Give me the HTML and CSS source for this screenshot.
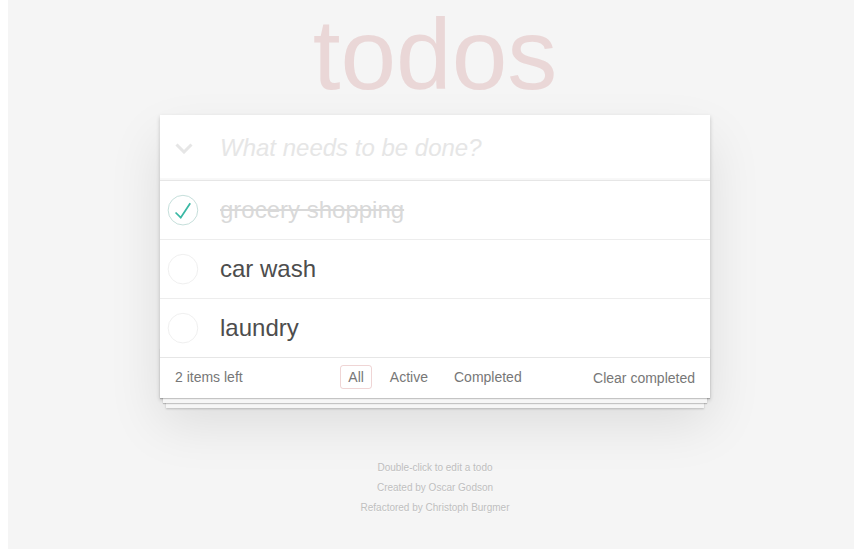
FILE: index.html
```html
<!DOCTYPE html>
<html>
<head>
<meta charset="utf-8">
<title>todos</title>
<link rel="stylesheet" href="styles.css">
</head>
<body>
<div class="page">
  <h1 class="title">todos</h1>
  <section class="todoapp">
    <header class="header">
      <span class="toggle-all">
        <svg width="18" height="11" viewBox="0 0 18 11"><polyline points="1.5,1.5 9,9 16.5,1.5" fill="none" stroke="#e6e6e6" stroke-width="3"/></svg>
      </span>
      <input class="new-todo" placeholder="What needs to be done?">
    </header>
    <section class="main">
      <ul class="todo-list">
        <li class="todo completed">
          <svg class="toggle" width="40" height="40" viewBox="-10 -18 100 135"><circle cx="50" cy="50" r="50" fill="none" stroke="#bddad5" stroke-width="3"/><path fill="#3ab8a4" d="M72 25L42 71 27 56l-4 4 20 20 34-52z"/></svg>
          <label class="todo-label">grocery shopping</label>
        </li>
        <li class="todo">
          <svg class="toggle" width="40" height="40" viewBox="-10 -18 100 135"><circle cx="50" cy="50" r="50" fill="none" stroke="#ededed" stroke-width="3"/></svg>
          <label class="todo-label">car wash</label>
        </li>
        <li class="todo">
          <svg class="toggle" width="40" height="40" viewBox="-10 -18 100 135"><circle cx="50" cy="50" r="50" fill="none" stroke="#ededed" stroke-width="3"/></svg>
          <label class="todo-label">laundry</label>
        </li>
      </ul>
    </section>
    <footer class="footer">
      <span class="todo-count">2 items left</span>
      <ul class="filters">
        <li><a class="filter selected">All</a></li>
        <li><a class="filter">Active</a></li>
        <li><a class="filter">Completed</a></li>
      </ul>
      <span class="clear-wrap"><button class="clear-completed">Clear completed</button></span>
    </footer>
  </section>
  <footer class="info">
    <p>Double-click to edit a todo</p>
    <p>Created by Oscar Godson</p>
    <p>Refactored by Christoph Burgmer</p>
  </footer>
</div>
</body>
</html>
```

FILE: styles.css
```css
html {
  background: #fff;
  margin: 0;
  padding: 0;
}

body {
  margin: 0 8px;
  padding: 0 0 0 8px;
  min-height: 549px;
  box-sizing: border-box;
  background: #f5f5f5;
  font: 14px "Liberation Sans", Arial, sans-serif;
  line-height: 1.4em;
  color: #4d4d4d;
  overflow: hidden;
}

.page {
  width: 550px;
  margin: 0 auto;
  padding-top: 2px;
}

.title {
  margin: 0;
  height: 104px;
  font-size: 100px;
  line-height: 104px;
  font-weight: 100;
  text-align: center;
  color: rgba(175, 47, 47, 0.15);
  text-rendering: optimizeLegibility;
}

.todoapp {
  background: #fff;
  margin: 9px 0 0;
  position: relative;
  box-shadow: 0 2px 4px 0 rgba(0, 0, 0, 0.2), 0 25px 50px 0 rgba(0, 0, 0, 0.1);
}

.header {
  display: flex;
  align-items: center;
  height: 65px;
  box-shadow: inset 0 -2px 1px rgba(0, 0, 0, 0.03);
}

.toggle-all {
  display: flex;
  width: 18px;
  height: 11px;
  margin: 0 27px 0 15px;
  padding-top: 1px;
}

.new-todo {
  flex: 1;
  min-width: 0;
  margin: 0;
  padding: 0 16px 0 0;
  border: none;
  outline: none;
  background: transparent;
  font-family: inherit;
  font-size: 24px;
  line-height: 33.6px;
  height: 65px;
  box-sizing: border-box;
  color: inherit;
}

.new-todo::placeholder {
  font-style: italic;
  font-weight: 300;
  color: #e6e6e6;
}

.main {
  border-top: 1px solid #e6e6e6;
}

.todo-list {
  margin: 0;
  padding: 0;
  list-style: none;
}

.todo {
  display: flex;
  align-items: center;
  font-size: 24px;
  border-bottom: 1px solid #ededed;
}

.todo:last-child {
  border-bottom: none;
}

.toggle {
  flex: none;
  margin-right: 20px;
}

.todo-label {
  display: block;
  padding: 15px 15px 15px 0;
  line-height: 28px;
  word-break: break-all;
  color: #4d4d4d;
}

.completed .todo-label {
  color: #d9d9d9;
  text-decoration: line-through;
}

.footer {
  position: relative;
  display: grid;
  grid-template-columns: 1fr auto 1fr;
  align-items: center;
  height: 20px;
  padding: 10px 15px;
  border-top: 1px solid #e6e6e6;
  color: #777;
  text-align: center;
}

.footer::before {
  content: '';
  position: absolute;
  right: 0;
  bottom: 0;
  left: 0;
  height: 50px;
  overflow: hidden;
  box-shadow: 0 1px 1px rgba(0, 0, 0, 0.2),
              0 8px 0 -3px #f6f6f6,
              0 9px 1px -3px rgba(0, 0, 0, 0.2),
              0 16px 0 -6px #f6f6f6,
              0 17px 2px -6px rgba(0, 0, 0, 0.2);
}

.todo-count {
  text-align: left;
  line-height: 20px;
  margin-top: -2px;
}

.filters {
  display: flex;
  align-items: center;
  gap: 10px;
  height: 20px;
  margin: -2px 0 0;
  padding: 0;
  list-style: none;
  line-height: 20px;
}

.filters li {
  display: flex;
  align-items: center;
  height: 20px;
}

.filter {
  display: block;
  padding: 1px 7px;
  line-height: 20px;
  border: 1px solid transparent;
  border-radius: 3px;
  color: inherit;
  text-decoration: none;
}

.filter.selected {
  border-color: rgba(175, 47, 47, 0.2);
}

.clear-wrap {
  text-align: right;
  position: relative;
  z-index: 1;
}

.clear-completed {
  margin: 0;
  padding: 0;
  border: 0;
  background: none;
  font-family: inherit;
  font-size: 100%;
  line-height: 20px;
  color: inherit;
  cursor: pointer;
}

.info {
  margin: 65px auto 0;
  color: #bfbfbf;
  font-size: 10px;
  text-shadow: 0 1px 0 rgba(255, 255, 255, 0.5);
  text-align: center;
}

.info p {
  margin: 10px 0;
  line-height: 1;
}
```
